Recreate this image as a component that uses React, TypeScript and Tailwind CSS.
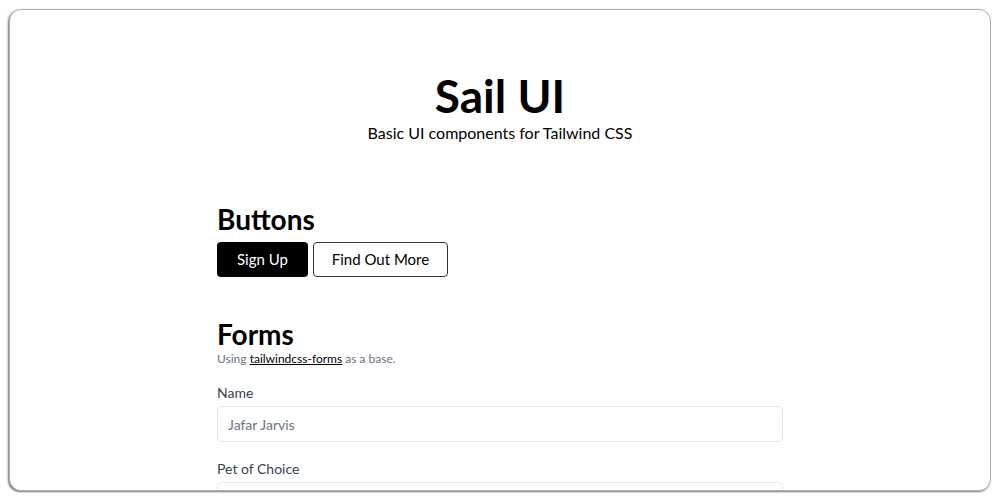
export default function App() {
  return (
    <div className="h-[500px] w-full overflow-hidden bg-white p-[9px]" style={{ fontFamily: 'Lato, sans-serif' }}>
      <div className="h-[482px] overflow-hidden rounded-xl border border-[#b0b0b0] bg-white shadow-[-1px_1px_2px_rgba(0,0,0,0.55)]">
        <header className="flex flex-col items-center pt-[63px] text-center">
          <h1 className="text-[46px] font-bold leading-none text-black">Sail UI</h1>
          <p className="mt-[2px] text-base leading-6 text-black">Basic UI components for Tailwind CSS</p>
        </header>

        <main className="mx-auto mt-[58px] w-[566px]">
          {/* Buttons */}
          <section>
            <h2 className="text-[28px] font-bold leading-8 text-black">Buttons</h2>
            <div className="mt-[7px] flex gap-[5px]">
              <button className="h-[35px] w-[91px] rounded bg-black text-[15px] text-white">Sign Up</button>
              <button className="h-[35px] w-[135px] rounded border border-[#333] bg-white text-[15px] text-black">
                Find Out More
              </button>
            </div>
          </section>

          {/* Forms */}
          <section className="mt-[41px]">
            <h2 className="text-[28px] font-bold leading-8 text-black">Forms</h2>
            <p className="text-xs leading-[18px] text-gray-500">
              Using <a href="#" className="text-black underline">tailwindcss-forms</a> as a base.
            </p>
            <label className="mt-[15px] block">
              <span className="block text-sm leading-5 text-gray-700">Name</span>
              <input
                className="mt-[3px] block h-[36px] w-full rounded border border-gray-200 px-[10px] text-sm text-gray-700 placeholder:text-gray-500 focus:outline-none"
                placeholder="Jafar Jarvis"
              />
            </label>
            <label className="mt-[17px] block">
              <span className="block text-sm leading-5 text-gray-700">Pet of Choice</span>
              <select className="mt-[3px] block h-[36px] w-full rounded border border-gray-200 bg-white px-[10px] text-sm text-gray-700">
                <option>Cat</option>
              </select>
            </label>
          </section>
        </main>
      </div>
    </div>
  );
}
